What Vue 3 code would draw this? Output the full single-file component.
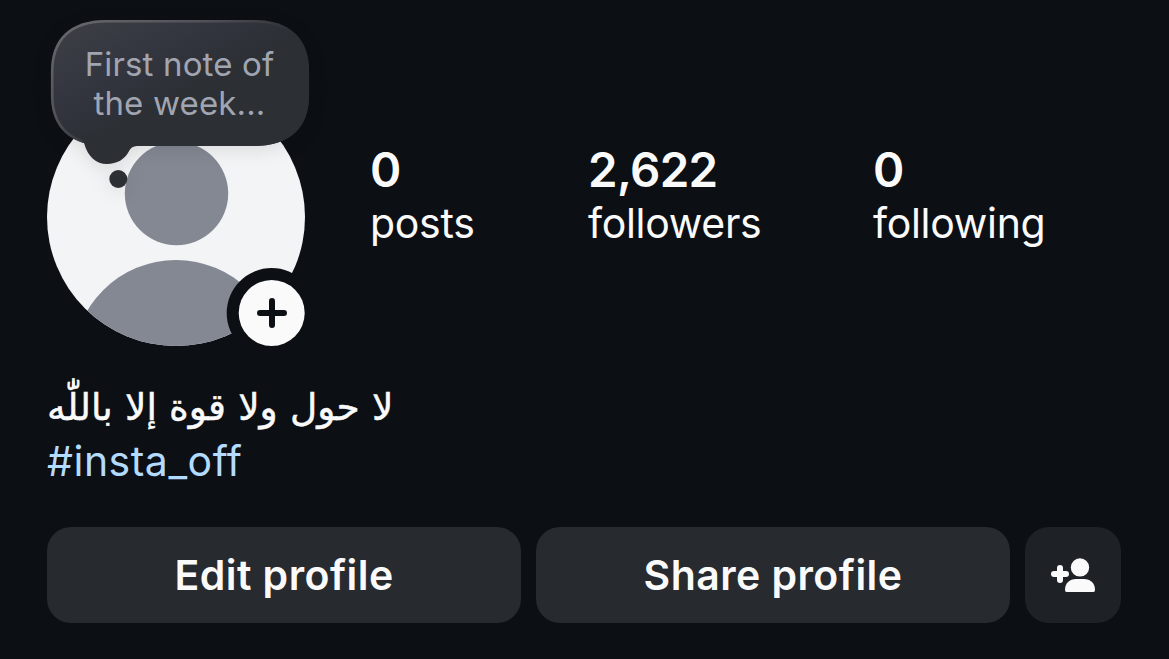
<template>
  <main class="profile">
    <header class="profile-header">
      <div class="avatar">
        <svg class="avatar-image" viewBox="0 0 258 258">
          <defs>
            <clipPath id="avatar-clip"><circle cx="129" cy="129" r="129" /></clipPath>
          </defs>
          <g clip-path="url(#avatar-clip)">
            <rect width="258" height="258" fill="#f3f4f6" />
            <circle cx="129.5" cy="105.5" r="51.7" fill="#848893" />
            <circle cx="129" cy="275" r="103" fill="#848893" />
          </g>
          <circle cx="224.7" cy="225" r="45" fill="#0c0f14" />
          <circle cx="224.7" cy="225" r="33" fill="#fafafb" />
          <path
            d="M225 213v24M213 225h24"
            fill="none"
            stroke="#0c0f14"
            stroke-width="6"
            stroke-linecap="round"
          />
        </svg>
        <div class="note">
          <svg class="note-shape" viewBox="0 0 298 200">
            <defs>
              <linearGradient id="note-fill" gradientUnits="userSpaceOnUse" x1="55" y1="10" x2="115" y2="125">
                <stop offset="0" stop-color="#3b3e44" />
                <stop offset="0.5" stop-color="#32353e" />
                <stop offset="0.85" stop-color="#2c2f34" />
              </linearGradient>
              <linearGradient id="note-edge" gradientUnits="userSpaceOnUse" x1="40" y1="20" x2="110" y2="130">
                <stop offset="0" stop-color="#63656a" />
                <stop offset="0.5" stop-color="#505257" />
                <stop offset="0.92" stop-color="#2c2f34" />
              </linearGradient>
            </defs>
            <path :d="bubble" fill="url(#note-fill)" />
            <path :d="bubbleEdge" fill="none" stroke="url(#note-edge)" stroke-width="2.6" />
            <path
              d="M54 133C58 147 66 154 77 154C87 154 95 149 98.500 142Q101 136 107 136L110 125H50Z"
              fill="#2c2f34"
            />
            <circle cx="88.300" cy="169" r="9" fill="#2c2f34" />
          </svg>
          <p class="note-text">First note of<br />the week...</p>
        </div>
      </div>

      <dl class="stats">
        <div v-for="stat in stats" :key="stat.label" class="stat">
          <dd class="stat-value">{{ stat.value }}</dd>
          <dt class="stat-label">{{ stat.label }}</dt>
        </div>
      </dl>
    </header>

    <section class="bio">
      <p class="bio-text" dir="rtl" lang="ar">لا حول ولا قوة إلا باللّٰه</p>
      <a class="bio-tag">#insta_off</a>
    </section>

    <div class="actions">
      <button class="action edit">Edit profile</button>
      <button class="action share">Share profile</button>
      <button class="action discover" aria-label="Discover people">
        <svg width="46" height="36" viewBox="0 0 46 36">
          <circle cx="30" cy="10.400" r="9.200" fill="#fafafb" />
          <path
            d="M15 33C15 26 19.500 22 26 22H34C40.500 22 45 26 45 33Q45 35 43.500 35H16.500Q15 35 15 33Z"
            fill="#fafafb"
          />
          <path d="M10 11v12M4 17h12" fill="none" stroke="#fafafb" stroke-width="6" stroke-linecap="round" />
        </svg>
      </button>
    </div>
  </main>
</template>

<script setup>
const stats = [
  { value: '0', label: 'posts' },
  { value: '2,622', label: 'followers' },
  { value: '0', label: 'following' },
]

const bubble =
  'M77 10H223C260 10 279 28 279 62V85C279 118 260 136 223 136H77C40 136 21 118 21 85V62C21 28 40 10 77 10Z'
const bubbleEdge =
  'M77 11.200H223C259 11.200 277.800 29 277.800 62V85C277.800 117 259 134.800 223 134.800H77C41 134.800 22.200 117 22.200 85V62C22.200 29 41 11.200 77 11.200Z'
</script>

<style>
body {
  background: #0c0f14;
}
</style>

<style scoped>
.profile {
  box-sizing: border-box;
  width: 1169px;
  height: 659px;
  padding: 88px 48px 36px 47px;
  background: #0c0f14;
  color: #fafafb;
  font-family: Inter, "Liberation Sans", sans-serif;
  overflow: hidden;
}

.profile-header {
  display: flex;
  gap: 65px;
}

.avatar {
  position: relative;
  width: 258px;
  height: 258px;
  flex-shrink: 0;
}

.avatar-image {
  display: block;
  width: 258px;
  height: 258px;
}

/* floats above the picture, tail pointing at the head */
.note {
  position: absolute;
  left: -17px;
  top: -78px;
  width: 298px;
  height: 200px;
}

.note-shape {
  position: absolute;
  inset: 0;
  width: 298px;
  height: 200px;
  filter: drop-shadow(0 4px 9px rgba(0, 0, 0, 0.1));
}

.note-text {
  position: relative;
  margin: 0;
  padding: 35px 0 0 1px;
  text-align: center;
  color: #a1a5b1;
  font-size: 33px;
  line-height: 39px;
  letter-spacing: 0.15px;
}

.stats {
  display: grid;
  grid-template-columns: 218px 285px auto;
  margin: 0;
  padding-top: 54px;
}

.stat-value {
  margin: 0;
  font-size: 47.5px;
  font-weight: 600;
  line-height: 56px;
  letter-spacing: -0.7px;
}

.stat-label {
  font-size: 41px;
  line-height: 50px;
  letter-spacing: -0.3px;
}

.bio {
  display: flex;
  flex-direction: column;
  align-items: flex-start;
  padding-top: 34px;
}

.bio-text {
  height: 54px;
  margin: 0;
  font-family: "DejaVu Sans", sans-serif;
  font-size: 37.5px;
  line-height: 54px;
  word-spacing: 0.3px;
  -webkit-text-stroke: 0.5px currentColor;
  white-space: nowrap;
}

.bio-tag {
  color: #b3dbff;
  font-size: 41px;
  line-height: 54px;
  letter-spacing: 0.5px;
}

.actions {
  display: grid;
  grid-template-columns: 474px 474px 96px;
  gap: 15px;
  padding-top: 39px;
}

.action {
  display: flex;
  align-items: center;
  justify-content: center;
  height: 96px;
  padding: 0;
  border: 0;
  border-radius: 24px;
  background: #272a2f;
  color: #fafafb;
  font-family: inherit;
  font-size: 41px;
  font-weight: 600;
  letter-spacing: 0.45px;
}

.discover {
  background: #1e2226;
}
</style>
